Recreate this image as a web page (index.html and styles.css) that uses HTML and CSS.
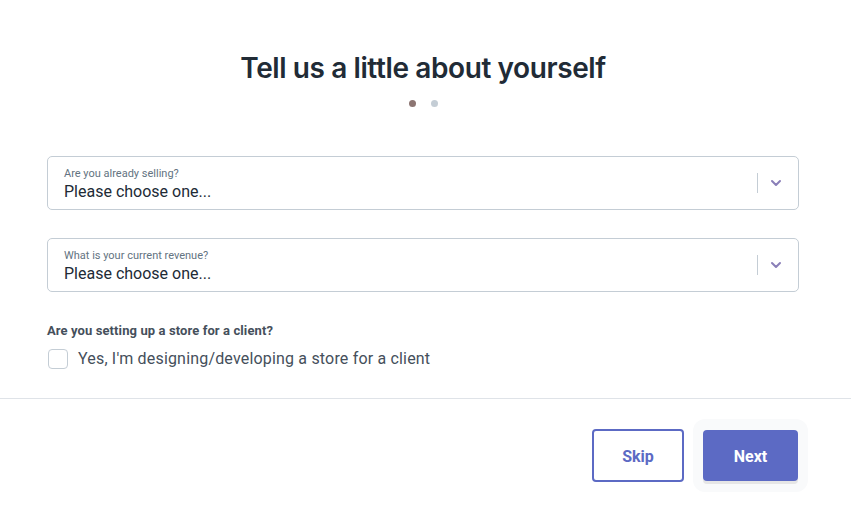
FILE: index.html
```html
<!DOCTYPE html>
<html>
<head>
<meta charset="utf-8">
<link rel="stylesheet" href="styles.css">
</head>
<body>
<div class="page">
  <div class="content">
    <h1 class="title">Tell us a little about yourself</h1>
    <div class="dots"><span class="dot dot-active"></span><span class="dot"></span></div>
    <div class="field">
      <div class="field-text">
        <div class="field-label">Are you already selling?</div>
        <div class="field-value">Please choose one...</div>
      </div>
      <div class="field-sep"></div>
      <svg class="chev" width="12" height="8" viewBox="0 0 12 8"><path d="M2 2 L6 6 L10 2" fill="none" stroke="#8a7fb8" stroke-width="2" stroke-linecap="round" stroke-linejoin="round"/></svg>
    </div>
    <div class="field">
      <div class="field-text">
        <div class="field-label">What is your current revenue?</div>
        <div class="field-value">Please choose one...</div>
      </div>
      <div class="field-sep"></div>
      <svg class="chev" width="12" height="8" viewBox="0 0 12 8"><path d="M2 2 L6 6 L10 2" fill="none" stroke="#8a7fb8" stroke-width="2" stroke-linecap="round" stroke-linejoin="round"/></svg>
    </div>
    <div class="question">Are you setting up a store for a client?</div>
    <label class="check-row"><span class="checkbox"></span><span class="check-text">Yes, I'm designing/developing a store for a client</span></label>
  </div>
  <div class="divider"></div>
  <div class="actions">
    <button class="btn btn-skip">Skip</button>
    <div class="next-wrap"><button class="btn btn-next">Next</button></div>
  </div>
</div>
</body>
</html>
```
FILE: styles.css
```css
html, body { margin: 0; padding: 0; background: #fff; }
body { font-family: Roboto, "Noto Sans", sans-serif; color: #212b36; }
.page { width: 851px; }
.content { margin-left: 47px; width: 752px; padding-top: 49px; }
.title { margin: 0; text-align: center; font-family: Inter, "Noto Sans", sans-serif; font-weight: 600; font-size: 28px; line-height: 38px; color: #212b36; letter-spacing: -0.4px; }
.dots { display: flex; justify-content: center; gap: 15px; margin-top: 13px; height: 8px; }
.dot { width: 7px; height: 7px; border-radius: 50%; background: #c4cdd5; }
.dot-active { background: #8c7572; }
.field { display: flex; align-items: center; height: 52px; border: 1px solid #c4cdd5; border-radius: 5px; margin-top: 48px; box-sizing: content-box; }
.field + .field { margin-top: 28px; }
.field-text { flex: 1; padding-left: 16px; padding-top: 2px; }
.field-label { font-size: 11px; line-height: 12px; color: #637381; margin-top: 1px; }
.field-value { font-size: 16px; line-height: 20px; color: #212b36; margin-top: 2px; }
.field-sep { width: 1px; height: 20px; background: #c4cdd5; }
.chev { margin: 0 16px 0 12px; }
.question { margin-top: 31px; font-size: 13px; font-weight: 700; color: #454f5b; line-height: 16px; letter-spacing: 0.1px; }
.check-row { display: flex; align-items: center; margin-top: 10px; gap: 10px; }
.checkbox { width: 18px; height: 18px; border: 1px solid #c4cdd5; border-radius: 4px; margin-left: 1px; }
.check-text { font-size: 16px; line-height: 20px; color: #454f5b; letter-spacing: 0.18px; }
.divider { height: 1px; background: #dfe3e8; margin-top: 29px; }
.actions { display: flex; justify-content: flex-end; align-items: center; padding-right: 43px; margin-top: 20px; gap: 9px; }
.btn { font-family: Roboto, sans-serif; font-size: 16px; font-weight: 700; border-radius: 4px; cursor: pointer; }
.btn-skip { width: 92px; height: 53px; background: #fff; border: 2px solid #5c6ac4; color: #5c6ac4; padding-top: 2px; }
.next-wrap { padding: 11px 10px; background: #f9fafb; border-radius: 12px; }
.btn-next { width: 95px; height: 51px; background: #5c6ac4; border: none; color: #fff; box-shadow: 0 3px 0 0 #e6e6e6; padding-top: 2px; }
```
